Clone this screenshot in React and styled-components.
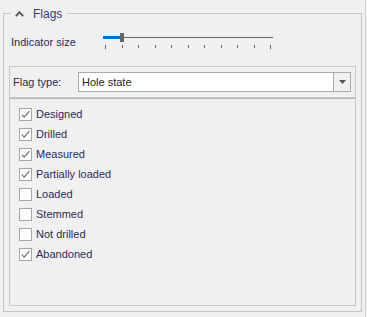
import React from 'react'
import styled, { createGlobalStyle } from 'styled-components'

const GlobalStyle = createGlobalStyle`
  html, body {
    margin: 0;
    padding: 0;
    background: #f0f0f0;
  }
  body {
    font-family: "Liberation Sans", Arial, sans-serif;
    font-size: 11px;
    color: #2c2c58;
  }
`

const Page = styled.div`
  display: flex;
  width: 367px;
  height: 317px;
  overflow: hidden;
`

const Group = styled.section`
  box-sizing: border-box;
  margin: 13px 0 0 3px;
  width: 359px;
  height: 299px;
  border: 1px solid #c6c6c6;
  display: flex;
  flex-direction: column;
`

const Legend = styled.div`
  display: flex;
  align-items: center;
  gap: 9px;
  width: fit-content;
  height: 15px;
  margin: -8px 0 0 7px;
  padding: 0 5px 0 4px;
  background: #f0f0f0;
  font-size: 12px;
  color: #3a3a78;
`

const Chevron = () => (
  <svg width="9" height="6" viewBox="0 0 9 6">
    <polyline points="0.8,5.2 4.5,1.4 8.2,5.2" fill="none" stroke="#555" strokeWidth="1.8" />
  </svg>
)

const SizeRow = styled.div`
  display: flex;
  align-items: flex-start;
  padding: 12px 0 0 7px;
  height: 45px;
  box-sizing: border-box;
`

const Label = styled.span`
  width: ${p => p.$width}px;
  margin-top: ${p => p.$top || 0}px;
  line-height: 14px;
  white-space: nowrap;
`

const Slider = styled.div`
  width: 171px;
  display: flex;
  flex-direction: column;
`

const Track = styled.div`
  display: flex;
  align-items: center;
  height: 9px;
  padding-left: 1px;
`

const Fill = styled.div`
  width: 17px;
  height: 3px;
  background: #0a6fc8;
`

const Thumb = styled.div`
  width: 4px;
  height: 9px;
  background: #666;
`

const Rail = styled.div`
  flex: 1;
  height: 1px;
  background: #6a6a6a;
`

const Ticks = styled.div`
  display: flex;
  justify-content: space-between;
  align-items: flex-start;
  margin-top: 3px;
  padding: 0 2px 0 3px;
`

const Tick = styled.div`
  width: 1px;
  height: ${p => (p.$long ? 4 : 3)}px;
  background: #666;
`

const Panels = styled.div`
  display: flex;
  flex-direction: column;
  flex: 1;
  padding: 0 5px 5px 5px;
`

const TypePanel = styled.div`
  display: flex;
  align-items: center;
  height: 32px;
  box-sizing: border-box;
  padding: 0 4px 0 3px;
  border: 1px solid #c9c9c9;
`

const Combo = styled.div`
  flex: 1;
  display: flex;
  height: 20px;
  box-sizing: border-box;
  border: 1px solid #a9a9a9;
  background: #fff;
  color: #1e1e1e;
`

const ComboText = styled.div`
  flex: 1;
  padding-left: 3px;
  line-height: 18px;
`

const ComboButton = styled.div`
  width: 16px;
  display: flex;
  align-items: center;
  justify-content: center;
  border-left: 1px solid #a9a9a9;
  background: #f0f0f0;
`

const ListPanel = styled.div`
  flex: 1;
  display: flex;
  flex-direction: column;
  padding: 5px 0 0 9px;
  border: 1px solid #c6c6c6;
  border-top-color: #b8b8b8;
`

const Row = styled.label`
  display: flex;
  align-items: center;
  gap: 4px;
  height: 20px;
`

const Box = styled.span`
  width: 13px;
  height: 13px;
  box-sizing: border-box;
  border: 1px solid #a6a6a6;
  background: #fdfdfd;
  display: flex;
  align-items: center;
  justify-content: center;
`

const Edge = styled.div`
  margin-left: 3px;
  width: 1px;
  background: #d2d2d2;
`

const flags = [
  ['Designed', true],
  ['Drilled', true],
  ['Measured', true],
  ['Partially loaded', true],
  ['Loaded', false],
  ['Stemmed', false],
  ['Not drilled', false],
  ['Abandoned', true],
]

const Check = ({ on }) => (
  <Box>
    {on && (
      <svg width="11" height="11" viewBox="0 0 11 11">
        <polyline points="1.8,5.6 4.2,8.2 9.4,2.2" fill="none" stroke="#707070" strokeWidth="1.2" />
      </svg>
    )}
  </Box>
)

const App = () => {
  return (
    <Page>
      <GlobalStyle />
      <Group>
        <Legend>
          <Chevron />
          <span>Flags</span>
        </Legend>
        <SizeRow>
          <Label $width={91} $top={2}>Indicator size</Label>
          <Slider>
            <Track>
              <Fill />
              <Thumb />
              <Rail />
            </Track>
            <Ticks>
              {Array.from({ length: 11 }, (_, i) => (
                <Tick key={i} $long={i === 0 || i === 10} />
              ))}
            </Ticks>
          </Slider>
        </SizeRow>
        <Panels>
          <TypePanel>
            <Label $width={65}>Flag type:</Label>
            <Combo>
              <ComboText>Hole state</ComboText>
              <ComboButton>
                <svg width="7" height="5" viewBox="0 0 7 5">
                  <polygon points="0,0 7,0 3.5,4" fill="#555" />
                </svg>
              </ComboButton>
            </Combo>
          </TypePanel>
          <ListPanel>
            {flags.map(([name, on]) => (
              <Row key={name}>
                <Check on={on} />
                <span>{name}</span>
              </Row>
            ))}
          </ListPanel>
        </Panels>
      </Group>
      <Edge />
    </Page>
  )
}

export default App
